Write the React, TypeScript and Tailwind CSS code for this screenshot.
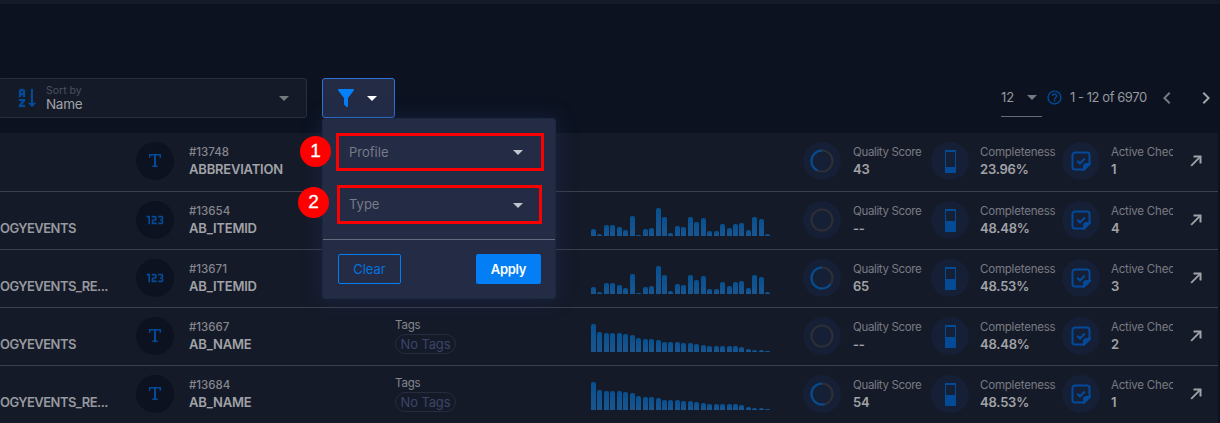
import type { ReactNode } from "react";
import { MdChevronLeft, MdChevronRight, MdHelpOutline } from "react-icons/md";

type Row = {
  container: string;
  kind: "text" | "number";
  id: string;
  name: string;
  tags: boolean;
  bars: number[];
  score: number | null;
  complete: number;
  checks: number;
};

const mixed = [7, 2, 11, 11, 9, 6, 20, 1, 7, 8, 28, 19, 3, 10, 9, 19, 14, 18, 5, 5, 12, 8, 12, 13, 6, 19, 17, 2];
const falling = [28, 20, 19, 19, 19, 18, 17, 14, 13, 13, 12, 10, 10, 10, 9, 9, 8, 7, 6, 6, 6, 6, 6, 5, 3, 2, 2, 1];

const rows: Row[] = [
  { container: "", kind: "text", id: "#13748", name: "ABBREVIATION", tags: false, bars: [], score: 43, complete: 23.96, checks: 1 },
  { container: "OGYEVENTS", kind: "number", id: "#13654", name: "AB_ITEMID", tags: false, bars: mixed, score: null, complete: 48.48, checks: 4 },
  { container: "OGYEVENTS_RE...", kind: "number", id: "#13671", name: "AB_ITEMID", tags: false, bars: mixed, score: 65, complete: 48.53, checks: 3 },
  { container: "OGYEVENTS", kind: "text", id: "#13667", name: "AB_NAME", tags: true, bars: falling, score: null, complete: 48.48, checks: 2 },
  { container: "OGYEVENTS_RE...", kind: "text", id: "#13684", name: "AB_NAME", tags: true, bars: falling, score: 54, complete: 48.53, checks: 1 },
];

function Caret({ className }: { className: string }) {
  return (
    <svg viewBox="0 0 24 24" className={`size-6 shrink-0 ${className}`} fill="currentColor">
      <path d="M7 10L12 15L17 10H7Z" />
    </svg>
  );
}

function SortIcon() {
  return (
    <svg viewBox="0 0 24 24" className="size-6 shrink-0 text-[#044b97]" fill="currentColor" stroke="currentColor" strokeWidth="0.3">
      <path d="M19 17H22L18 21L14 17H17V3H19M11 13V15L7.67 19H11V21H5V19L8.33 15H5V13M9 3H7C5.9 3 5 3.9 5 5V11H7V9H9V11H11V5C11 3.9 10.11 3 9 3M9 7H7V5H9Z" />
    </svg>
  );
}

function FilterIcon() {
  return (
    <svg viewBox="0 0 24 24" className="size-6 shrink-0 text-[#0480f8]" fill="currentColor">
      <path d="M14,12V19.88C14.04,20.18 13.94,20.5 13.71,20.71C13.32,21.1 12.69,21.1 12.3,20.71L10.29,18.7C10.06,18.47 9.96,18.16 10,17.87V12H9.97L4.21,4.62C3.87,4.19 3.95,3.56 4.38,3.22C4.57,3.08 4.78,3 5,3H19C19.22,3 19.43,3.08 19.62,3.22C20.05,3.56 20.13,4.19 19.79,4.62L14.03,12H14Z" />
    </svg>
  );
}

function TextTypeIcon() {
  return (
    <svg viewBox="0 0 12 13" className="mb-[2px] h-[13px] w-3" fill="none" stroke="#044a9b" strokeWidth="1.5">
      <path d="M0.75 3.8V0.75H11.25V3.8" />
      <path d="M6 0.75V12.2" strokeWidth="2" />
      <path d="M3.3 12.25H8.7" />
    </svg>
  );
}

function NumberTypeIcon() {
  return (
    <svg viewBox="0 0 24 24" className="size-5" fill="#044b97">
      <path d="M4,17V9H2V7H6V17H4M22,15C22,16.11 21.1,17 20,17H16V15H20V13H18V11H20V9H16V7H20A2,2 0 0,1 22,9V10.5A1.5,1.5 0 0,1 20.5,12A1.5,1.5 0 0,1 22,13.5V15M14,15V17H8V13C8,11.89 8.9,11 10,11H12V9H8V7H12A2,2 0 0,1 14,9V11C14,12.11 13.1,13 12,13H10V15H14Z" />
    </svg>
  );
}

function ScoreRing({ score }: { score: number | null }) {
  return (
    <svg viewBox="0 0 24 24" className="size-6" fill="none" strokeWidth="2.2">
      <circle cx="12" cy="12" r="10.5" stroke="#2d2f34" />
      {score !== null && (
        <circle cx="12" cy="12" r="10.5" stroke="#044b90" pathLength="100" strokeDasharray={`${score} 100`} transform="matrix(0 -1 -1 0 24 24)" />
      )}
    </svg>
  );
}

function CheckIcon() {
  return (
    <svg viewBox="0 0 20 20" className="mb-px size-5" fill="none" stroke="#044a9b" strokeWidth="2">
      <path d="M4 1.5H16A2.5 2.5 0 0 1 18.5 4V13L13 18.5H4A2.5 2.5 0 0 1 1.5 16V4A2.5 2.5 0 0 1 4 1.5Z" />
      <path d="M13 18.5V15.5A2.5 2.5 0 0 1 15.5 13H18.5Z" fill="#044a9b" />
      <path d="M6.3 9.8L9 12.5L13.8 7.5" />
    </svg>
  );
}

function Disc({ className, children }: { className: string; children: ReactNode }) {
  return <div className={`flex size-[38px] shrink-0 items-center justify-center rounded-full ${className}`}>{children}</div>;
}

function Stat({ label, value, className, spacing }: { label: string; value: string; className: string; spacing: string }) {
  return (
    <div className={`shrink-0 overflow-hidden whitespace-nowrap pt-[11px] ${className}`}>
      <div className={`text-[11.5px] leading-[17px] text-[#797b82] ${spacing}`}>{label}</div>
      <div className="text-[13px] font-semibold leading-[17px] tracking-[-0.2px] text-[#a1a3a7]">{value}</div>
    </div>
  );
}

function TableRow({ row }: { row: Row }) {
  return (
    <div className="flex h-[58px] w-full border-t border-[#3d404b] bg-[#151a29] first:border-t-0">
      <div className="w-[136px] shrink-0 pt-[27px] text-[13px] font-semibold leading-[18px] tracking-[-0.55px] text-[#97999e]">{row.container}</div>
      <div className="w-[53px] shrink-0 pt-[9px]">
        <Disc className="bg-[#0c1220]">{row.kind === "text" ? <TextTypeIcon /> : <NumberTypeIcon />}</Disc>
      </div>
      <div className="w-[206px] shrink-0 pt-[11px]">
        <div className="text-[11.5px] font-medium leading-[16px] text-[#85878d]">{row.id}</div>
        <div className="text-[13px] font-semibold leading-[18px] tracking-[-0.2px] text-[#a1a3a7]">{row.name}</div>
      </div>
      <div className="w-[196px] shrink-0 pt-[9px]">
        {row.tags && (
          <>
            <div className="text-[11.5px] leading-[17px] tracking-[-0.2px] text-[#85878d]">Tags</div>
            <div className="flex h-5 w-[61px] items-center justify-center rounded-full border border-[#262b3d] pt-px text-[13px] tracking-[-0.15px] text-[#3c4567]">
              No Tags
            </div>
          </>
        )}
      </div>
      <div className="flex h-[44px] w-[212px] shrink-0 items-end gap-[1.46px]">
        {row.bars.map((h, i) => (
          <div key={i} className="w-[5px] shrink-0 rounded-t-[2px] bg-linear-to-b from-[#06508f] to-[#195690]" style={{ height: h }} />
        ))}
      </div>
      <div className="w-[50px] shrink-0 pt-[9px]">
        <Disc className="bg-[#151f35]"><ScoreRing score={row.score} /></Disc>
      </div>
      <Stat label="Quality Score" value={row.score === null ? "--" : String(row.score)} className="w-[78px]" spacing="tracking-[-0.35px]" />
      <div className="w-[49px] shrink-0 pt-[9px]">
        <Disc className="bg-[#151f35]">
          <div className="flex h-[23px] w-[11px] items-end border border-t-2 border-[#044b97]">
            <div className="w-full bg-[#044b97]" style={{ height: `${row.complete}%` }} />
          </div>
        </Disc>
      </div>
      <Stat label="Completeness" value={`${row.complete.toFixed(2)}%`} className="w-[82px]" spacing="tracking-[-0.2px]" />
      <div className="w-[49px] shrink-0 pt-[9px]">
        <Disc className="bg-[#151f35]"><CheckIcon /></Disc>
      </div>
      <Stat label="Active Checks" value={String(row.checks)} className="w-[62px]" spacing="tracking-[-0.2px]" />
      <div className="flex grow justify-center pt-[19px]">
        <svg viewBox="0 0 24 24" className="size-[18px]" fill="#a1a3a7" stroke="#a1a3a7" strokeWidth="0.6">
          <path d="M5,17.59L15.59,7H9V5H19V15H17V8.41L6.41,19L5,17.59Z" />
        </svg>
      </div>
    </div>
  );
}

function Marker({ label, className }: { label: string; className: string }) {
  return (
    <div className={`absolute flex size-[31px] items-center justify-center rounded-full bg-[#fe0000] font-['Liberation_Sans',sans-serif] text-[19px] text-white [-webkit-text-stroke:0.3px_white] ${className}`}>
      {label}
    </div>
  );
}

function FilterPanel() {
  return (
    <div className="absolute top-[40px] left-0 z-10 flex h-[181px] w-[234px] flex-col rounded-[3px] border border-[#1c2741] bg-[#232b45] shadow-[0_0_18px_2px_rgba(30,50,90,0.4)]">
      <div className="flex h-[121px] flex-col gap-[14px] border-b border-[#646a7b] pt-[14px] pl-[13px]">
        <div className="flex h-[38px] w-[208px] items-center justify-between border-[3px] border-[#fb0000] pr-[11px] pl-[10px] text-[13px] text-[#777b87]">
          <span className="pt-px">Profile</span>
          <Caret className="text-[#c1c4cd]" />
        </div>
        <div className="ml-px flex h-[39px] w-[205px] items-center justify-between border-[3px] border-[#fb0000] pr-[9px] pl-[9px] text-[13px] text-[#777b87]">
          <span className="pt-px">Type</span>
          <Caret className="text-[#c1c4cd]" />
        </div>
      </div>
      <div className="flex justify-between pt-[14px] pr-[14px] pl-[15px]">
        <button className="h-[30px] w-[63px] rounded-[2px] border border-[#047ef5] pt-px text-[13px] text-[#0872de]">Clear</button>
        <button className="h-[30px] w-[65px] rounded-[2px] bg-[#047ef5] pt-px text-[13px] font-semibold tracking-[-0.3px] text-white">Apply</button>
      </div>
      <Marker label="1" className="top-[17px] -left-[23px]" />
      <Marker label="2" className="top-[68px] -left-[25px]" />
    </div>
  );
}

export default function App() {
  return (
    <div className="h-[423px] w-[1220px] overflow-hidden bg-[#0c1220] font-['Inter',sans-serif]">
      <div className="h-[4px] bg-[#151a29]" />
      <div className="flex h-[129px] pt-[74px]">
        <div className="-ml-[2px] flex h-[40px] w-[309px] items-center rounded-[3px] border border-[#292e3b] bg-[#151a29] pr-[10px] pl-[15px]">
          <SortIcon />
          <div className="grow pb-px pl-[8px]">
            <div className="text-[10.5px] leading-[12px] text-[#4d515b]">Sort by</div>
            <div className="text-[13.5px] leading-[14px] tracking-[-0.3px] text-[#a1a3a7]">Name</div>
          </div>
          <Caret className="text-[#777980]" />
        </div>
        <div className="relative ml-[15px] h-[40px] w-[73px]">
          <button className="flex h-full w-full items-center gap-[2px] rounded-[3px] border border-[#2e74d8] bg-[#232b45] pb-px pl-[11px]">
            <FilterIcon />
            <Caret className="text-white" />
          </button>
          <FilterPanel />
        </div>
        <div className="ml-auto flex h-[39px] w-[219px] items-center text-[13px] text-[#96989e]">
          <div className="flex h-full w-[41px] items-center justify-between border-b border-[#686b74]">
            <span className="pt-[2px]">12</span>
            <Caret className="-mr-[2px] text-[#777980]" />
          </div>
          <MdHelpOutline className="ml-[4px] size-[17px] shrink-0 text-[#044b97]" />
          <div className="ml-[7px] w-[78px] shrink-0 whitespace-nowrap tracking-[-0.45px]">1 - 12 of 6970</div>
          <MdChevronLeft className="ml-[7px] size-6 shrink-0 text-[#777980]" />
          <MdChevronRight className="ml-[15px] size-6 shrink-0 text-[#a1a3a7]" />
        </div>
      </div>
      <div className="w-[1218px]">
        {rows.map((row) => (
          <TableRow key={row.id} row={row} />
        ))}
      </div>
    </div>
  );
}
